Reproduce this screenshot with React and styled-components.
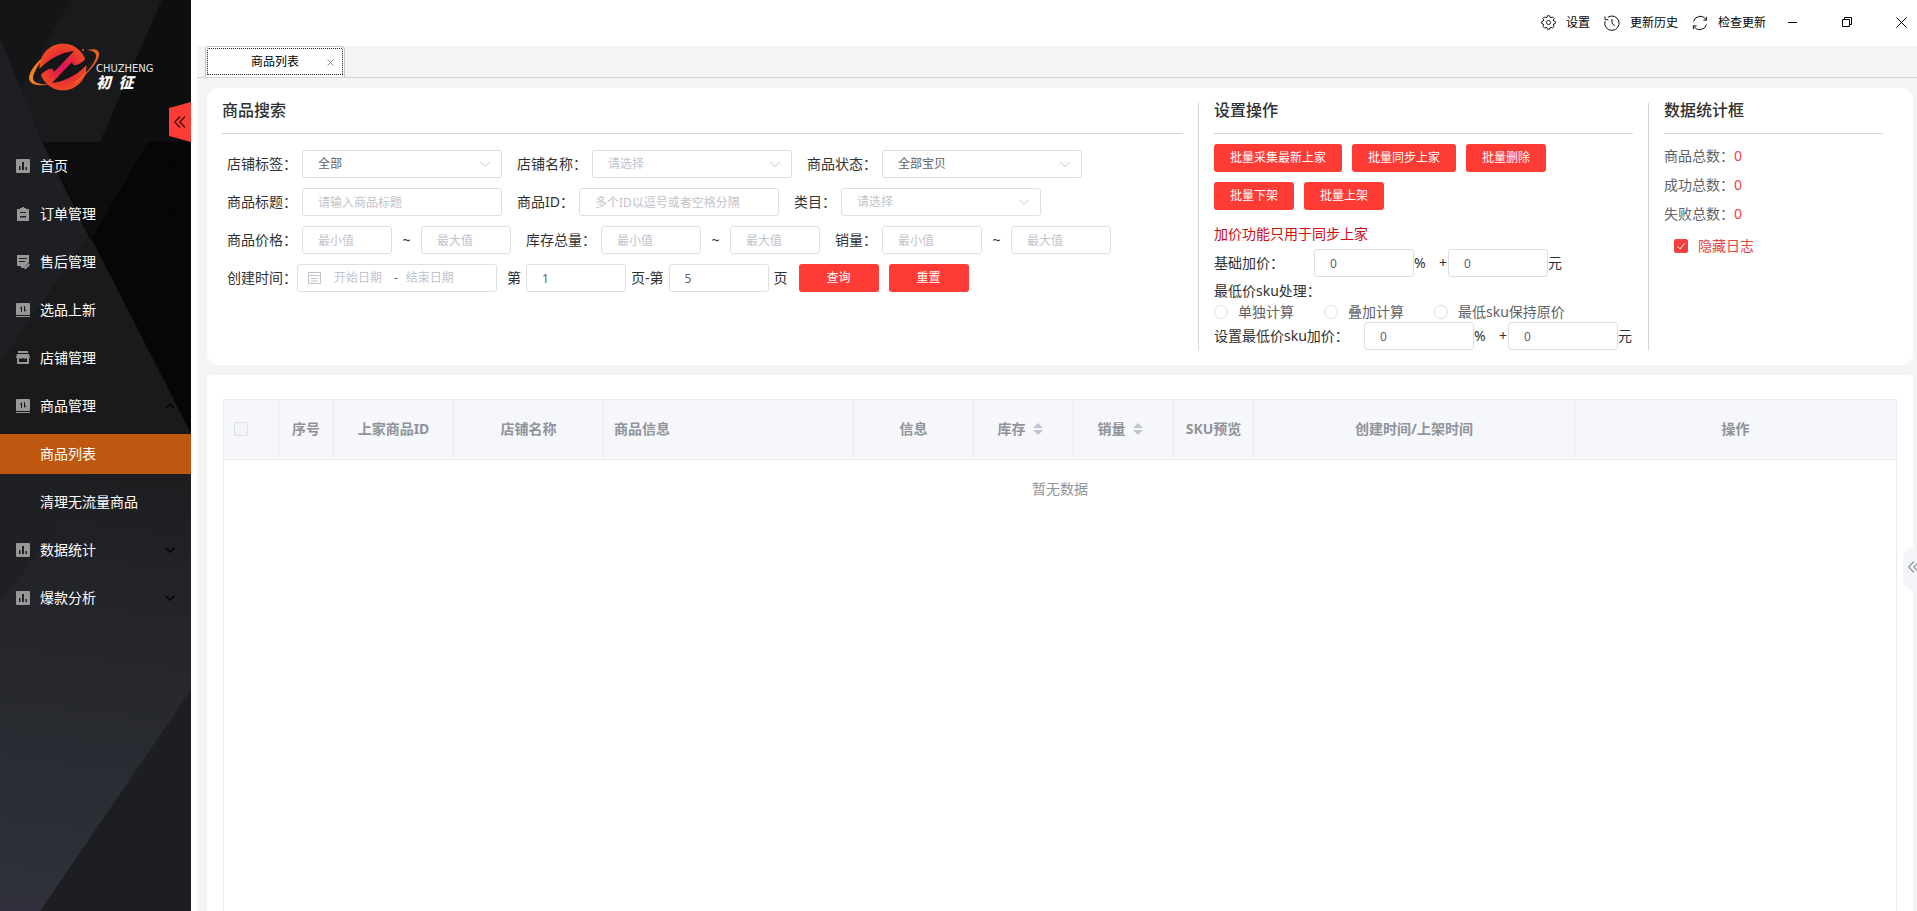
import React from "react";
import styled, { createGlobalStyle, css } from "styled-components";

const GlobalStyle = createGlobalStyle`
  *, *::before, *::after { box-sizing: border-box; }
  html, body, #root { height: 100%; margin: 0; }
  body { overflow: hidden; background: #fff; }
  body, button, input, select, table {
    font-family: "Noto Sans", "Noto Sans CJK SC", sans-serif;
  }
  h2, p, ul { margin: 0; padding: 0; }
  ul { list-style: none; }
  button { border: 0; padding: 0; background: none; cursor: pointer; }
  svg { flex-shrink: 0; }
`;

const Page = styled.div`
  display: flex;
  height: 100%;
`;

/* ---------- sidebar ---------- */

const Sidebar = styled.aside`
  position: relative;
  flex: 0 0 191px;
  background: #1c1d20;
  overflow: hidden;
`;

const SidebarArt = styled.svg`
  position: absolute;
  inset: 0;
  width: 100%;
  height: 100%;
`;

const SidebarContent = styled.div`
  position: relative;
`;

const Brand = styled.div`
  display: flex;
  align-items: center;
  height: 146px;
  padding: 0 0 10px 28px;
`;

const BrandText = styled.div`
  margin-left: -4px;
  padding-top: 18px;
`;

const BrandName = styled.div`
  color: #e6e6e6;
  font: 10px/10px "DejaVu Sans", sans-serif;
`;

const BrandNameCn = styled.div`
  color: #fff;
  font: italic 900 15px/16px "Noto Sans CJK SC", sans-serif;
`;

const CollapseButton = styled.button`
  position: absolute;
  top: 102px;
  right: 0;
  display: flex;
  align-items: center;
  justify-content: center;
  width: 22px;
  height: 40px;
  background: #ff3b36;
  clip-path: polygon(0 6px, 100% 0, 100% 100%, 0 34px);
`;

const Menu = styled.ul`
  display: flex;
  flex-direction: column;
  gap: 8px;
`;

const MenuLink = styled.a`
  display: flex;
  align-items: center;
  gap: 10px;
  height: 40px;
  padding: 0 16px;
  padding-left: ${(p) => (p.$sub ? "40px" : "16px")};
  background: ${(p) => (p.$active ? "#c05711" : "transparent")};
  color: #fff;
  font-size: 14px;
  line-height: 20px;
  text-decoration: none;
  white-space: nowrap;
`;

const MenuArrow = styled.svg`
  margin-left: auto;
`;

/* ---------- frame ---------- */

const Main = styled.main`
  position: relative;
  display: flex;
  flex: 1;
  flex-direction: column;
  min-width: 0;
`;

const TopBar = styled.header`
  display: flex;
  align-items: center;
  justify-content: flex-end;
  flex: 0 0 46px;
  padding-bottom: 1px;
  background: #fff;
`;

const TopActions = styled.div`
  display: flex;
  gap: 14px;
  margin-right: 11px;
`;

const TopAction = styled.button`
  display: flex;
  align-items: center;
  gap: 10px;
  color: #000;
  font-size: 12px;
  line-height: 16px;
`;

const WindowControls = styled.div`
  display: flex;
  gap: 22px;
`;

const WindowButton = styled.button`
  display: flex;
  align-items: center;
  justify-content: center;
  width: 32px;
  height: 32px;
`;

const Workspace = styled.div`
  display: flex;
  flex: 1;
  flex-direction: column;
  min-height: 0;
  margin-left: 6px;
  background: #f3f4f5;
`;

const TabStrip = styled.div`
  display: flex;
  flex: 0 0 31px;
  padding-left: 8px;
  border-bottom: 1px solid #d3d6d9;
`;

const Tab = styled.div`
  display: flex;
  align-items: center;
  width: 140px;
  height: 31px;
  padding: 0 6px 0 45px;
  border: 1px solid #c4c6c9;
  border-bottom: 0;
  border-radius: 4px 4px 0 0;
  outline: 1px dotted #222;
  outline-offset: -3px;
  background: #fff;
  color: #000;
  font-size: 12px;
  line-height: 16px;
`;

const TabClose = styled.button`
  display: flex;
  margin-left: auto;
  padding: 4px;
`;

const Cards = styled.div`
  display: flex;
  flex: 1;
  flex-direction: column;
  gap: 10px;
  min-height: 0;
  padding: 10px 4px 0 10px;
`;

/* ---------- filter card ---------- */

const FilterCard = styled.section`
  display: flex;
  padding: 15px;
  border-radius: 12px;
  background: #fff;
`;

const Panel = styled.section`
  flex: ${(p) => (p.$width ? `0 0 ${p.$width}` : "1")};
  min-width: 0;
  padding: 0 15px 0 ${(p) => (p.$divided ? "15px" : "0")};
  ${(p) => p.$divided && css`border-left: 1px solid #d3d6d9;`}
`;

const PanelTitle = styled.h2`
  padding-bottom: 16px;
  border-bottom: 1px solid #d3d6d9;
  color: #303133;
  font-size: 16px;
  font-weight: 500;
  line-height: 14px;
`;

const Form = styled.form`
  display: flex;
  flex-direction: column;
  gap: 10px;
  padding: 16px 0 0 5px;
`;

const FormRow = styled.div`
  display: flex;
  align-items: center;
  gap: ${(p) => (p.$tight ? "5px" : "15px")};
  height: 28px;
  color: #303133;
  font-size: 14px;
  line-height: 20px;
  white-space: nowrap;
`;

const Field = styled.div`
  display: flex;
  align-items: center;
  gap: ${(p) => (p.$joined ? "0" : "5px")};
`;

const Label = styled.label`
  color: #303133;
  font-size: 14px;
  line-height: 20px;
  white-space: nowrap;
`;

const control = css`
  height: 28px;
  padding: 0 15px;
  border: 1px solid #dcdfe6;
  border-radius: 3px;
  background: #fff;
  color: #606266;
  font-size: 12px;
  line-height: 16px;
  outline: none;
`;

const Input = styled.input`
  ${control}
  width: ${(p) => p.$width || "200px"};
  &::placeholder { color: #c0c4cc; opacity: 1; }
`;

const SelectBox = styled.div`
  position: relative;
  width: 200px;
`;

const SelectInput = styled.select`
  ${control}
  display: block;
  width: 100%;
  appearance: none;
  color: ${(p) => (p.$empty ? "#c0c4cc" : "#606266")};
`;

const SelectArrow = styled.svg`
  position: absolute;
  top: 11px;
  right: 12px;
  pointer-events: none;
`;

const Tilde = styled.span`
  width: 19px;
  text-align: center;
`;

const RangeField = styled.div`
  display: flex;
  align-items: center;
  gap: 5px;
`;

const DateRange = styled.div`
  ${control}
  display: flex;
  align-items: center;
  width: 200px;
  padding: 0 10px;
`;

const DateInput = styled.input`
  width: ${(p) => p.$width};
  padding: 0;
  border: 0;
  background: none;
  font-size: 12px;
  line-height: 16px;
  text-align: center;
  outline: none;
  &::placeholder { color: #c0c4cc; opacity: 1; }
`;

const PageRange = styled.div`
  display: flex;
  align-items: center;
  gap: 5px;
  margin-left: 5px;
`;

const ButtonGroup = styled.div`
  display: flex;
  flex-wrap: wrap;
  gap: 10px;
  padding: ${(p) => p.$padding || "0"};
`;

const RedButton = styled.button`
  min-width: 80px;
  height: 28px;
  padding: 0 16px;
  border-radius: 3px;
  background: #ff3b36;
  color: #fff;
  font-size: 12px;
  line-height: 16px;
  white-space: nowrap;
`;

/* ---------- operations panel ---------- */

const Notice = styled.p`
  padding: 14px 0 5px;
  color: #cf0b12;
  font-size: 14px;
  line-height: 20px;
`;

const MarkupRow = styled.div`
  display: flex;
  align-items: center;
  height: 28px;
  color: #303133;
  font-size: 14px;
  line-height: 20px;
  white-space: nowrap;
`;

const MarkupLabel = styled.label`
  flex: 0 0 ${(p) => p.$width};
`;

const Unit = styled.span`
  display: flex;
  justify-content: space-between;
  width: 34px;
  padding-right: 1px;
`;

const SkuTitle = styled.p`
  margin-top: 4px;
  color: #303133;
  font-size: 14px;
  line-height: 20px;
`;

const RadioRow = styled.div`
  display: flex;
  gap: 30px;
  height: 21px;
`;

const RadioLabel = styled.label`
  display: flex;
  align-items: center;
  gap: 10px;
  color: #606266;
  font-size: 14px;
  line-height: 20px;
  white-space: nowrap;
`;

const Radio = styled.input`
  width: 14px;
  height: 14px;
  margin: 0;
  appearance: none;
  border: 1px solid #dcdfe6;
  border-radius: 50%;
  background: #fff;
`;

/* ---------- statistics panel ---------- */

const Stats = styled.div`
  padding-top: 7px;
`;

const Stat = styled.p`
  display: flex;
  align-items: center;
  color: #606266;
  font-size: 14px;
  line-height: 29px;
`;

const StatValue = styled.span`
  color: #f23c3c;
`;

const LogToggle = styled.label`
  display: flex;
  align-items: center;
  gap: 10px;
  margin-top: 8px;
  padding-left: 10px;
  color: #e04444;
  font-size: 14px;
  line-height: 20px;
`;

const Checkbox = styled.input`
  display: block;
  width: 14px;
  height: 14px;
  margin: 0;
  appearance: none;
  border: 1px solid #dcdfe6;
  border-radius: 2px;
  background: #fff;
  ${(p) => p.$muted && css`background: #f2f3fb; border-color: #dcdfee;`}
  &:checked { border-color: #f53f3f; background: #f53f3f; }
`;

const CheckWrap = styled.span`
  position: relative;
  display: flex;
`;

const CheckMark = styled.svg`
  position: absolute;
  inset: 0;
  pointer-events: none;
`;

/* ---------- table card ---------- */

const TableCard = styled.section`
  flex: 1;
  display: flex;
  min-height: 0;
  padding: 24px 16px 0;
  border-radius: 4px 4px 0 0;
  background: #fff;
`;

const TableFrame = styled.div`
  flex: 1;
  min-width: 0;
  border: 1px solid #e8ebf0;
  border-bottom: 0;
`;

const Table = styled.table`
  width: 100%;
  table-layout: fixed;
  border-collapse: separate;
  border-spacing: 0;
  color: #909399;
  font-size: 14px;
  line-height: 20px;
`;

const Th = styled.th`
  height: 60px;
  padding: 0 10px 2px;
  border-right: 1px solid #e8ebf0;
  border-bottom: 1px solid #e8ebf0;
  background: #f5f7fa;
  font-weight: 700;
  text-align: ${(p) => p.$align || "center"};
  white-space: nowrap;
  &:last-child { border-right: 0; }
`;

const SortButton = styled.button`
  display: inline-flex;
  align-items: center;
  gap: 7px;
  padding-right: 7px;
  color: inherit;
  font-size: 14px;
  font-weight: 700;
  line-height: 20px;
`;

const EmptyCell = styled.td`
  height: 60px;
  padding: 0 0 2px;
  text-align: center;
`;

const DrawerHandle = styled.button`
  position: absolute;
  top: 547px;
  right: 0;
  display: flex;
  align-items: center;
  width: 14px;
  height: 44px;
  padding: 0 0 4px 5px;
  border-radius: 12px 0 0 12px;
  background: #f3f5f9;
  overflow: hidden;
`;

/* ---------- drawings ---------- */

const Backdrop = () => (
  <SidebarArt viewBox="0 0 191 911" preserveAspectRatio="none" aria-hidden="true">
    <defs>
      <linearGradient id="lower" gradientUnits="userSpaceOnUse" x1="120" y1="440" x2="60" y2="911">
        <stop offset="0" stopColor="#1c1c1e" />
        <stop offset="0.4" stopColor="#25262c" />
        <stop offset="0.7" stopColor="#292c32" />
        <stop offset="1" stopColor="#30313c" />
      </linearGradient>
    </defs>
    <rect width="191" height="911" fill="url(#lower)" />
    <polygon points="0,0 191,0 191,142 42,142 0,38" fill="#141516" />
    <polygon points="70,0 162,0 100,142 42,142 20,90" fill="#181a1b" />
    <polygon points="162,0 191,0 191,142 100,142" fill="#0d0e0f" />
    <polygon points="42,142 148,142 90,240 133,320 88,236" fill="#0c0c0c" />
    <polygon points="42,142 191,142 191,434 133,320" fill="#060606" />
    <polygon points="42,142 148,142 92,238" fill="#0d0d0e" />
    <polygon points="0,38 42,142 88,236 45,300 0,363" fill="#1d1f22" />
    <polygon points="88,236 133,320 191,434 191,460 90,460 0,600 0,363" fill="#1a1a1b" />
    <polygon points="90,460 50,540 0,600 0,470 30,460" fill="#1f2024" />
    <polygon points="191,690 191,911 40,911" fill="#1d1e22" />
  </SidebarArt>
);

const Logo = () => (
  <svg width="72" height="50" viewBox="0 0 72 50" aria-label="CHUZHENG">
    <defs>
      <radialGradient id="ball" cx="0.5" cy="0.5" r="0.5">
        <stop offset="0" stopColor="#e0145f" />
        <stop offset="0.5" stopColor="#e52a3a" />
        <stop offset="1" stopColor="#f04a22" />
      </radialGradient>
      <linearGradient id="ring" x1="0" y1="0" x2="1" y2="0">
        <stop offset="0" stopColor="#f58a1f" />
        <stop offset="1" stopColor="#ee5a24" />
      </linearGradient>
    </defs>
    <circle cx="35" cy="24" r="23.5" fill="url(#ball)" />
    <path d="M6 33C13 22 28 10 46 8L26 29c-1-6-8-4-18 8Z" fill="#151617" />
    <path d="M64 15C57 26 42 38 24 40L44 19c1 6 8 4 18-8Z" fill="#151617" />
    <path d="M13 16C4 24-1 34 2 38c3 5 12 5 20 3C12 42 5 40 5 35c0-4 4-11 9-18Z" fill="url(#ring)" />
    <path d="M59 7c8-2 13 0 12 5-1 8-12 19-22 27l-4 2c11-8 22-20 23-27 1-4-3-7-9-7Z" fill="url(#ring)" />
    <circle cx="55" cy="7" r="1" fill="#ee5a24" />
  </svg>
);

const MENU_ICONS = {
  chart: (
    <path fillRule="evenodd" d="M1 0h12a1 1 0 0 1 1 1v12a1 1 0 0 1-1 1H1a1 1 0 0 1-1-1V1a1 1 0 0 1 1-1ZM3 7v4h1.500V7ZM6 3v8h2V3ZM9.500 8v3H11V8Z" />
  ),
  clipboard: (
    <path fillRule="evenodd" d="M1 2h3V1h2V0h2v1h2v1h3v12H1ZM4 5v1h6V5ZM4 9v1.500h6V9Z" />
  ),
  note: (
    <path fillRule="evenodd" d="M1 0h12v7l-5 6H6l-2-2H1ZM3 3v1h8V3ZM3 6v1h6V6ZM13 8l1 2-4 4H8l1-2Z" />
  ),
  swap: (
    <path fillRule="evenodd" d="M1 0h12a1 1 0 0 1 1 1v10a1 1 0 0 1-1 1H1a1 1 0 0 1-1-1V1a1 1 0 0 1 1-1ZM6 3 3.500 5.500H5V9h1ZM8 3v6l2.500-2.500H9V3ZM0 13h14v1H0Z" />
  ),
  shop: (
    <path fillRule="evenodd" d="M2 0h10v2H2ZM1 3h12l1 4h-1v6H1V7H0ZM3 7v4h8V7l-2 1-2-1-2 1Z" />
  ),
};

const MenuIcon = ({ name }) => (
  <svg width="14" height="14" viewBox="0 0 14 14" fill="#979798" aria-hidden="true">
    {MENU_ICONS[name]}
  </svg>
);

const DoubleChevron = ({ color }) => (
  <svg width="12" height="12" viewBox="0 0 12 12" fill="none" stroke={color} strokeWidth="1.2" aria-hidden="true">
    <path d="M6 .5.8 6 6 11.5M11 .5 5.8 6 11 11.5" />
  </svg>
);

const GearIcon = () => (
  <svg width="15" height="15" viewBox="0 0 16 16" fill="none" stroke="#111" aria-hidden="true">
    <circle cx="8" cy="8" r="2.2" />
    <path d="M6.8.8h2.4l.4 1.7 1.1.4 1.5-.9 1.8 1.8-.9 1.5.4 1.1 1.7.4v2.4l-1.7.4-.4 1.1.9 1.5-1.8 1.8-1.5-.9-1.1.4-.4 1.7H6.800l-.4-1.7-1.1-.4-1.5.9L2 12.2l.9-1.5-.4-1.1-1.7-.4V6.8l1.7-.4.4-1.1L2 3.8 3.8 2l1.5.9 1.1-.4Z" />
  </svg>
);

const HistoryIcon = () => (
  <svg width="16" height="16" viewBox="0 0 16 16" fill="none" stroke="#111" aria-hidden="true">
    <path d="M3.8 2.3A7.2 7.2 0 1 1 1 6.2M1 1.5v3.2h3.2M8 4v4.2l2.8 2.6" />
  </svg>
);

const RefreshIcon = () => (
  <svg width="16" height="16" viewBox="0 0 16 16" fill="none" stroke="#111" aria-hidden="true">
    <path d="M1.5 6.5A6.8 6.8 0 0 1 14 4.8M14.6 1.8v3.4h-3.2M14.5 9.5A6.8 6.8 0 0 1 2 11.2M1.4 14.2v-3.4h3.2" />
  </svg>
);

const CalendarIcon = () => (
  <svg width="14" height="14" viewBox="0 0 14 14" fill="none" stroke="#c0c4cc" aria-hidden="true">
    <path d="M.5 1.500h12v11H.5ZM.5 4.500h12M3 7.500h7M3 10h7" />
  </svg>
);

const SortIcon = () => (
  <svg width="10" height="14" viewBox="0 0 10 14" fill="#c0c4cc" aria-hidden="true">
    <path d="M5 1 10 6H0ZM5 13 0 8h10Z" />
  </svg>
);

/* ---------- composed parts ---------- */

const SelectField = ({ id, label, value, empty }) => (
  <Field>
    <Label htmlFor={id}>{label}</Label>
    <SelectBox>
      <SelectInput id={id} $empty={empty}>
        <option>{value}</option>
      </SelectInput>
      <SelectArrow width="10" height="7" viewBox="0 0 10 7" fill="none" stroke="#c0c4cc">
        <path d="M.5 1 5 5.5 9.5 1" />
      </SelectArrow>
    </SelectBox>
  </Field>
);

const MinMaxField = ({ id, label, widths }) => (
  <RangeField>
    <Label htmlFor={id}>{label}</Label>
    <Input id={id} placeholder="最小值" $width={widths[0]} />
    <Tilde>~</Tilde>
    <Input aria-label={`${label}最大值`} placeholder="最大值" $width={widths[1]} />
  </RangeField>
);

const Markup = ({ id, label, labelWidth, inputWidth }) => (
  <MarkupRow>
    <MarkupLabel htmlFor={id} $width={labelWidth}>{label}</MarkupLabel>
    <Input id={id} defaultValue="0" $width={inputWidth} />
    <Unit><span>%</span><span>+</span></Unit>
    <Input aria-label={`${label}元`} defaultValue="0" $width={inputWidth} />
    <span>元</span>
  </MarkupRow>
);

const MENU = [
  { text: "首页", icon: "chart", arrow: "up" },
  { text: "订单管理", icon: "clipboard", arrow: "down" },
  { text: "售后管理", icon: "note" },
  { text: "选品上新", icon: "swap" },
  { text: "店铺管理", icon: "shop" },
  { text: "商品管理", icon: "swap", arrow: "up" },
  { text: "商品列表", sub: true, active: true },
  { text: "清理无流量商品", sub: true },
  { text: "数据统计", icon: "chart", arrow: "down" },
  { text: "爆款分析", icon: "chart", arrow: "down" },
];

const COLUMNS = [
  { key: "check", width: 55, align: "left" },
  { key: "no", text: "序号", width: 55 },
  { key: "pid", text: "上家商品ID", width: 120 },
  { key: "shop", text: "店铺名称", width: 150 },
  { key: "goods", text: "商品信息", width: 250, align: "left" },
  { key: "info", text: "信息", width: 120 },
  { key: "stock", text: "库存", width: 100, sort: true },
  { key: "sales", text: "销量", width: 100, sort: true },
  { key: "sku", text: "SKU预览", width: 80 },
  { key: "time", text: "创建时间/上架时间" },
  { key: "ops", text: "操作" },
];

export default function App() {
  return (
    <>
      <GlobalStyle />
      <Page>
        <Sidebar>
          <Backdrop />
          <SidebarContent>
            <Brand>
              <Logo />
              <BrandText>
                <BrandName>CHUZHENG</BrandName>
                <BrandNameCn>初&ensp;征</BrandNameCn>
              </BrandText>
            </Brand>
            <nav>
              <Menu>
                {MENU.map((m) => (
                  <li key={m.text}>
                    <MenuLink href="#" $sub={m.sub} $active={m.active}>
                      {m.icon && <MenuIcon name={m.icon} />}
                      {m.text}
                      {m.arrow && (
                        <MenuArrow width="10" height="6" viewBox="0 0 10 6" fill="none" stroke="#050505" strokeWidth="1.6">
                          <path d={m.arrow === "up" ? "M1 5 5 1l4 4" : "M1 1l4 4 4-4"} />
                        </MenuArrow>
                      )}
                    </MenuLink>
                  </li>
                ))}
              </Menu>
            </nav>
          </SidebarContent>
          <CollapseButton aria-label="收起">
            <DoubleChevron color="#3a0a0a" />
          </CollapseButton>
        </Sidebar>

        <Main>
          <TopBar>
            <TopActions>
              <TopAction><GearIcon />设置</TopAction>
              <TopAction><HistoryIcon />更新历史</TopAction>
              <TopAction><RefreshIcon />检查更新</TopAction>
            </TopActions>
            <WindowControls>
              <WindowButton aria-label="最小化">
                <svg width="10" height="10" viewBox="0 0 10 10" stroke="#000"><path d="M0 4.5h9" /></svg>
              </WindowButton>
              <WindowButton aria-label="还原">
                <svg width="11" height="11" viewBox="0 0 11 11" fill="none" stroke="#000">
                  <path d="M.5 2.5h7v7h-7ZM2.5 2.5v-2h7v7h-2" />
                </svg>
              </WindowButton>
              <WindowButton aria-label="关闭">
                <svg width="11" height="11" viewBox="0 0 11 11" stroke="#000"><path d="M.5.5l10 10M10.5.5l-10 10" /></svg>
              </WindowButton>
            </WindowControls>
          </TopBar>

          <Workspace>
            <TabStrip>
              <Tab>
                商品列表
                <TabClose aria-label="关闭标签">
                  <svg width="7" height="7" viewBox="0 0 7 7" stroke="#8a8d92"><path d="M.5.5l6 6M6.5.5l-6 6" /></svg>
                </TabClose>
              </Tab>
            </TabStrip>

            <Cards>
              <FilterCard>
                <Panel>
                  <PanelTitle>商品搜索</PanelTitle>
                  <Form onSubmit={(e) => e.preventDefault()}>
                    <FormRow>
                      <SelectField id="tag" label="店铺标签：" value="全部" />
                      <SelectField id="shop" label="店铺名称：" value="请选择" empty />
                      <SelectField id="state" label="商品状态：" value="全部宝贝" />
                    </FormRow>
                    <FormRow>
                      <Field>
                        <Label htmlFor="title">商品标题：</Label>
                        <Input id="title" placeholder="请输入商品标题" />
                      </Field>
                      <Field>
                        <Label htmlFor="pid">商品ID：</Label>
                        <Input id="pid" placeholder="多个ID以逗号或者空格分隔" />
                      </Field>
                      <SelectField id="cat" label="类目：" value="请选择" empty />
                    </FormRow>
                    <FormRow>
                      <MinMaxField id="price" label="商品价格：" widths={["90px", "90px"]} />
                      <MinMaxField id="stock" label="库存总量：" widths={["100px", "90px"]} />
                      <MinMaxField id="sales" label="销量：" widths={["100px", "100px"]} />
                    </FormRow>
                    <FormRow $tight>
                      <Field $joined>
                        <Label htmlFor="start">创建时间：</Label>
                        <DateRange>
                          <CalendarIcon />
                          <DateInput id="start" placeholder="开始日期" $width="72px" />
                          <span>-</span>
                          <DateInput aria-label="结束日期" placeholder="结束日期" $width="64px" />
                        </DateRange>
                      </Field>
                      <PageRange>
                        <label htmlFor="from">第</label>
                        <Input id="from" defaultValue="1" $width="100px" />
                        <label htmlFor="to">页-第</label>
                        <Input id="to" defaultValue="5" $width="100px" />
                        <span>页</span>
                      </PageRange>
                      <ButtonGroup $padding="0 0 0 6px">
                        <RedButton type="submit">查询</RedButton>
                        <RedButton type="reset">重置</RedButton>
                      </ButtonGroup>
                    </FormRow>
                  </Form>
                </Panel>

                <Panel $width="450px" $divided>
                  <PanelTitle>设置操作</PanelTitle>
                  <ButtonGroup $padding="10px 0 0">
                    <RedButton>批量采集最新上家</RedButton>
                    <RedButton>批量同步上家</RedButton>
                    <RedButton>批量删除</RedButton>
                    <RedButton>批量下架</RedButton>
                    <RedButton>批量上架</RedButton>
                  </ButtonGroup>
                  <Notice>加价功能只用于同步上家</Notice>
                  <Markup id="base" label="基础加价：" labelWidth="100px" inputWidth="100px" />
                  <SkuTitle>最低价sku处理：</SkuTitle>
                  <RadioRow>
                    <RadioLabel><Radio type="radio" name="sku" />单独计算</RadioLabel>
                    <RadioLabel><Radio type="radio" name="sku" />叠加计算</RadioLabel>
                    <RadioLabel><Radio type="radio" name="sku" />最低sku保持原价</RadioLabel>
                  </RadioRow>
                  <Markup id="lowest" label="设置最低价sku加价：" labelWidth="150px" inputWidth="110px" />
                </Panel>

                <Panel $width="250px" $divided>
                  <PanelTitle>数据统计框</PanelTitle>
                  <Stats>
                    <Stat>商品总数：<StatValue>0</StatValue></Stat>
                    <Stat>成功总数：<StatValue>0</StatValue></Stat>
                    <Stat>失败总数：<StatValue>0</StatValue></Stat>
                    <LogToggle>
                      <CheckWrap>
                        <Checkbox type="checkbox" defaultChecked />
                        <CheckMark width="14" height="14" viewBox="0 0 14 14" fill="none" stroke="#fff">
                          <path d="M3.5 7.5 6 10l4.5-5.5" />
                        </CheckMark>
                      </CheckWrap>
                      隐藏日志
                    </LogToggle>
                  </Stats>
                </Panel>
              </FilterCard>

              <TableCard>
                <TableFrame>
                  <Table>
                    <colgroup>
                      {COLUMNS.map((c) => <col key={c.key} width={c.width} />)}
                    </colgroup>
                    <thead>
                      <tr>
                        {COLUMNS.map((c) => (
                          <Th key={c.key} $align={c.align}>
                            {c.key === "check" && <Checkbox type="checkbox" aria-label="全选" $muted />}
                            {c.sort ? <SortButton>{c.text}<SortIcon /></SortButton> : c.text}
                          </Th>
                        ))}
                      </tr>
                    </thead>
                    <tbody>
                      <tr><EmptyCell colSpan={COLUMNS.length}>暂无数据</EmptyCell></tr>
                    </tbody>
                  </Table>
                </TableFrame>
              </TableCard>
            </Cards>
          </Workspace>
          <DrawerHandle aria-label="展开">
            <DoubleChevron color="#909399" />
          </DrawerHandle>
        </Main>
      </Page>
    </>
  );
}
